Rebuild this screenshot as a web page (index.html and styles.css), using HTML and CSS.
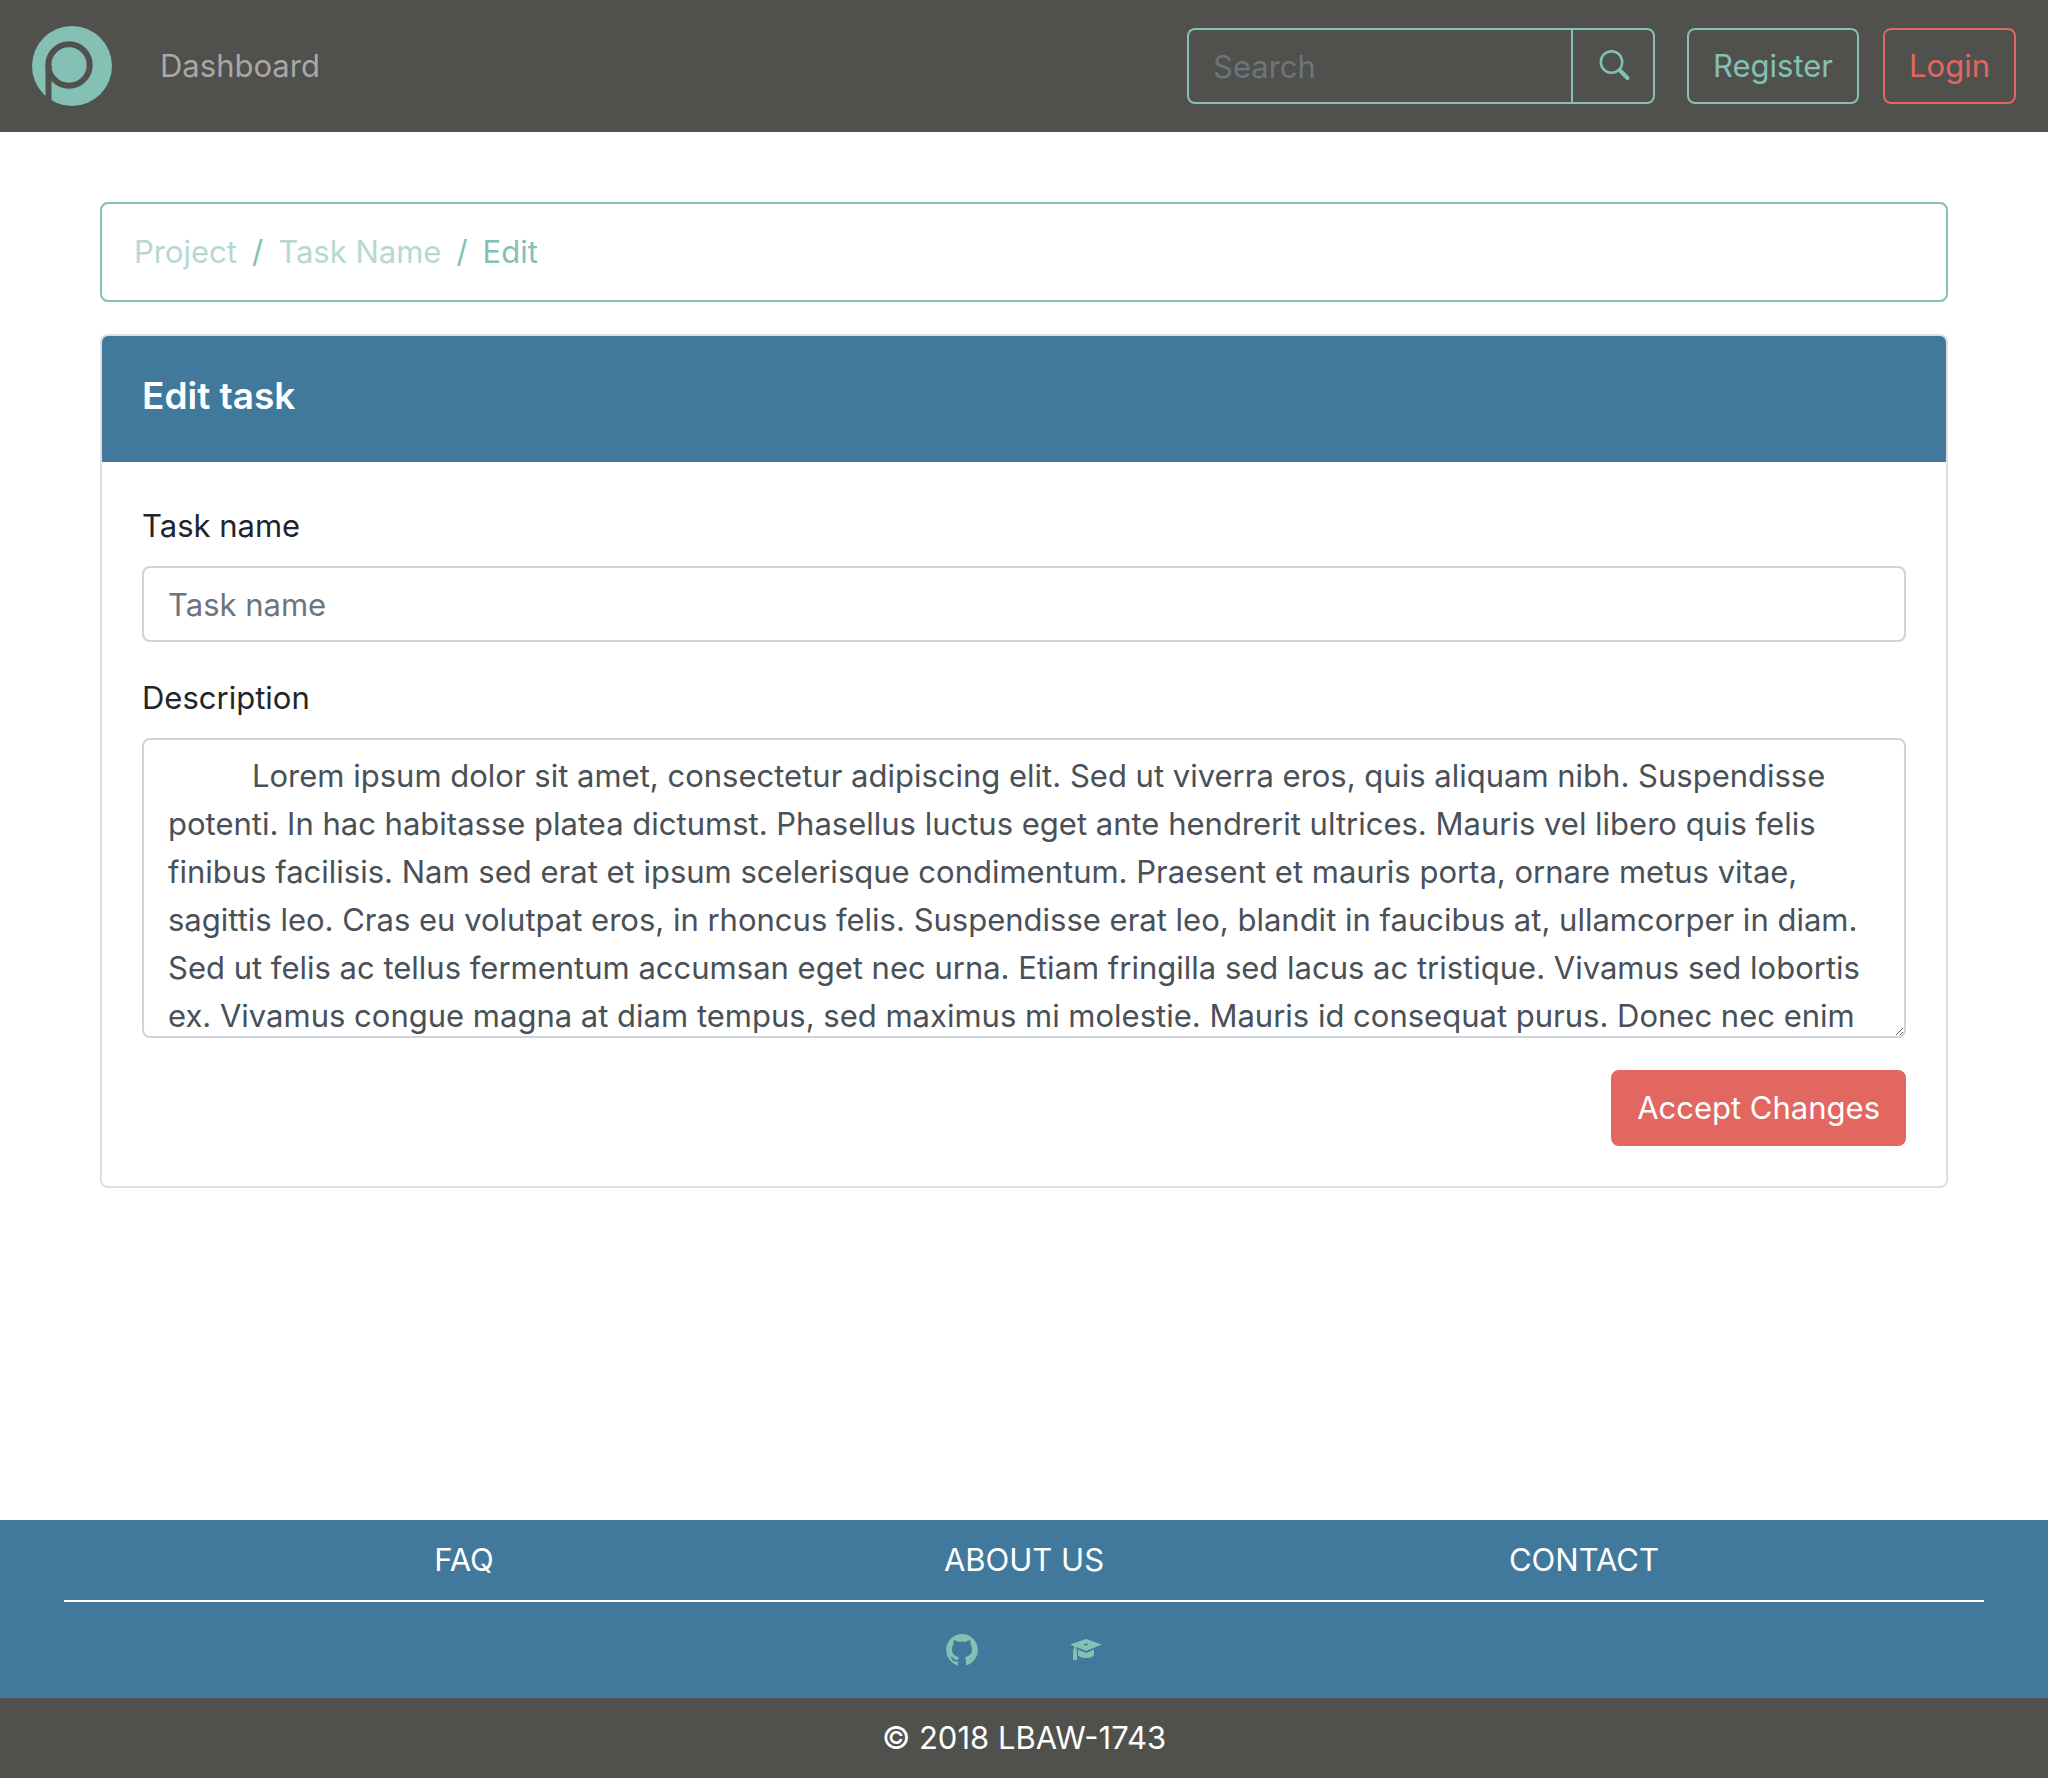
FILE: index.html
```html
<!DOCTYPE html>
<html lang="en">
<head>
  <meta charset="utf-8">
  <meta name="viewport" content="width=device-width, initial-scale=1">
  <title>Edit task</title>
  <link rel="stylesheet" href="styles.css">
</head>
<body>
  <header class="navbar">
    <a class="brand" href="#" aria-label="Home">
      <svg class="logo" viewBox="0 0 80 80" aria-hidden="true">
        <circle class="logo-disc" cx="40" cy="40" r="40"/>
        <circle class="logo-line" cx="37" cy="39" r="20.7"/>
        <path class="logo-line" d="M16.5 39V76"/>
      </svg>
    </a>
    <nav class="nav-links"><a class="nav-link" href="#">Dashboard</a></nav>
    <form class="search" role="search">
      <input class="search-input" type="search" placeholder="Search" aria-label="Search">
      <button class="search-button" type="submit" aria-label="Submit search">
        <svg class="search-icon" viewBox="0 0 32 32" aria-hidden="true">
          <circle cx="14.500" cy="12" r="10.700"/>
          <path d="M23 20.500L30.500 28"/>
        </svg>
      </button>
    </form>
    <div class="account">
      <button class="btn btn-outline" type="button">Register</button>
      <button class="btn btn-outline-danger" type="button">Login</button>
    </div>
  </header>

  <main class="content">
    <nav class="breadcrumb" aria-label="Breadcrumb">
      <a class="crumb" href="#">Project</a>
      <span class="crumb-divider">/</span>
      <a class="crumb" href="#">Task Name</a>
      <span class="crumb-divider">/</span>
      <span aria-current="page">Edit</span>
    </nav>

    <section class="card">
      <div class="card-header"><h1 class="card-title">Edit task</h1></div>
      <form class="card-body">
        <div class="field">
          <label for="task-name">Task name</label>
          <input class="control" id="task-name" type="text" placeholder="Task name">
        </div>
        <div class="field">
          <label for="description">Description</label>
          <textarea class="control control-area" id="description">Lorem ipsum dolor sit amet, consectetur adipiscing elit. Sed ut viverra eros, quis aliquam nibh. Suspendisse potenti. In hac habitasse platea dictumst. Phasellus luctus eget ante hendrerit ultrices. Mauris vel libero quis felis finibus facilisis. Nam sed erat et ipsum scelerisque condimentum. Praesent et mauris porta, ornare metus vitae, sagittis leo. Cras eu volutpat eros, in rhoncus felis. Suspendisse erat leo, blandit in faucibus at, ullamcorper in diam. Sed ut felis ac tellus fermentum accumsan eget nec urna. Etiam fringilla sed lacus ac tristique. Vivamus sed lobortis ex. Vivamus congue magna at diam tempus, sed maximus mi molestie. Mauris id consequat purus. Donec nec enim</textarea>
        </div>
        <button class="btn btn-danger" type="submit">Accept Changes</button>
      </form>
    </section>
  </main>

  <footer class="footer">
    <div class="footer-main">
      <nav class="footer-links">
        <a href="#">FAQ</a>
        <a href="#">ABOUT US</a>
        <a href="#">CONTACT</a>
      </nav>
      <div class="social">
        <a href="#" aria-label="GitHub">
          <svg viewBox="0 0 32 32" aria-hidden="true"><path fill-rule="evenodd" d="M16 0A16 16 0 0 0 11.500 31.300Q12 31.200 12 30.500V27.600C8.500 28.200 6.800 26.800 6 25C5.500 23.900 4.800 23.300 4 22.800C5.800 22.300 7 23.300 7.800 24.500C8.800 26 10.300 26.200 12 25.500C12.200 24.500 12.600 23.700 13.200 23.200C8.800 22.500 6 20 6 15.300C6 13.200 6.700 11.500 7.700 10.300C7.200 9 7.300 7.700 7.800 6.200C9.500 6.200 11 7 12.300 7.900Q16 7 19.700 7.900C21 7 22.500 6.200 24.200 6.200C24.700 7.700 24.800 9 24.300 10.300C25.300 11.500 26 13.200 26 15.300C26 20 23.200 22.500 18.800 23.200Q20 24.300 20 26.500V30.500Q20 31.200 20.500 31.300A16 16 0 0 0 16 0Z"/></svg>
        </a>
        <a href="#" aria-label="University">
          <svg viewBox="0 0 32 32" aria-hidden="true"><path fill-rule="evenodd" d="M16 5L32 10.5 16 17 6.500 13V15.500L7 19V26H3V17L4.500 12.500 0 10.500ZM14 10.500a2 1 0 1 0 4 0a2 1 0 1 0-4 0ZM8 15.500L16 19 24 15.500V21C24 22.500 20 24 16 24S8 22.500 8 21Z"/></svg>
        </a>
      </div>
    </div>
    <p class="copyright">© 2018 LBAW-1743</p>
  </footer>
</body>
</html>
```
FILE: styles.css
```css
:root {
  --teal: #84c0b4;
  --blue: #41799d;
  --red: #e16760;
  --dark: #50504d;
}

* { box-sizing: border-box; }

body {
  display: flex;
  flex-direction: column;
  min-height: 100vh;
  margin: 0;
  background: #fff;
  color: #212529;
  font: 31px/48px Inter, "Liberation Sans", sans-serif;
}

a { color: inherit; text-decoration: none; }
button, input, textarea { margin: 0; font: inherit; }

.navbar {
  display: flex;
  align-items: center;
  padding: 26px 32px;
  background: var(--dark);
}
.brand { display: flex; }
.logo { width: 80px; height: 80px; }
.logo-disc { fill: var(--teal); }
.logo-line { fill: none; stroke: var(--dark); stroke-width: 6; }
.nav-links { margin: 0 auto 0 48px; }
.nav-link { color: #a8a8a6; }

.search { display: flex; width: 468px; margin-right: 32px; }
.search-input {
  flex: 1;
  min-width: 0;
  height: 76px;
  padding: 12px 24px;
  border: 2px solid var(--teal);
  border-right: 0;
  border-radius: 8px 0 0 8px;
  background: transparent;
  color: var(--teal);
  appearance: none;
}
.search-button {
  display: flex;
  align-items: center;
  justify-content: center;
  width: 84px;
  border: 2px solid var(--teal);
  border-radius: 0 8px 8px 0;
  background: transparent;
}
.search-icon { width: 32px; height: 32px; flex: none; fill: none; stroke: var(--teal); stroke-width: 2.5; stroke-linecap: round; overflow: visible; }
.search-icon path { stroke-width: 4; }

.account { display: flex; gap: 24px; }
.btn {
  height: 76px;
  padding: 12px 24px;
  border: 2px solid;
  border-radius: 8px;
  background: transparent;
}
.btn-outline { color: var(--teal); }
.btn-outline-danger { color: var(--red); }
.btn-danger { align-self: flex-end; border-color: var(--red); background: var(--red); color: #fff; }

.content { flex: 1; padding: 70px 100px; }
.breadcrumb {
  display: flex;
  gap: 15px;
  margin-bottom: 32px;
  padding: 24px 32px;
  border: 2px solid var(--teal);
  border-radius: 8px;
  color: var(--teal);
}
.crumb { color: #b5d9d1; }

.card { border: 2px solid #dfdfdf; border-radius: 8px; overflow: hidden; }
.card-header { padding: 36px 40px 42px; background: var(--blue); }
.card-title { margin: 0; color: #fff; font-size: 37px; line-height: 48px; font-weight: 600; }
.card-body { display: flex; flex-direction: column; gap: 32px; padding: 40px; }
.field { display: flex; flex-direction: column; gap: 16px; }
.control {
  width: 100%;
  height: 76px;
  padding: 12px 24px;
  border: 2px solid #ced4da;
  border-radius: 8px;
  background: #fff;
  color: #495057;
}
.control-area { height: 300px; text-indent: 84px; overflow: hidden; resize: vertical; }
::placeholder { color: #6c757d; opacity: 1; }

.footer { color: #fff; text-align: center; }
.footer-main { padding: 0 64px 32px; background: var(--blue); }
.footer-links {
  display: grid;
  grid-template-columns: repeat(3, 1fr);
  padding: 16px 120px;
  border-bottom: 2px solid #fff;
}
.social { display: flex; justify-content: center; gap: 92px; padding-top: 32px; }
.social a { display: flex; }
.social svg { width: 32px; height: 32px; fill: var(--teal); }
.copyright { margin: 0; padding: 16px; background: var(--dark); }
```
